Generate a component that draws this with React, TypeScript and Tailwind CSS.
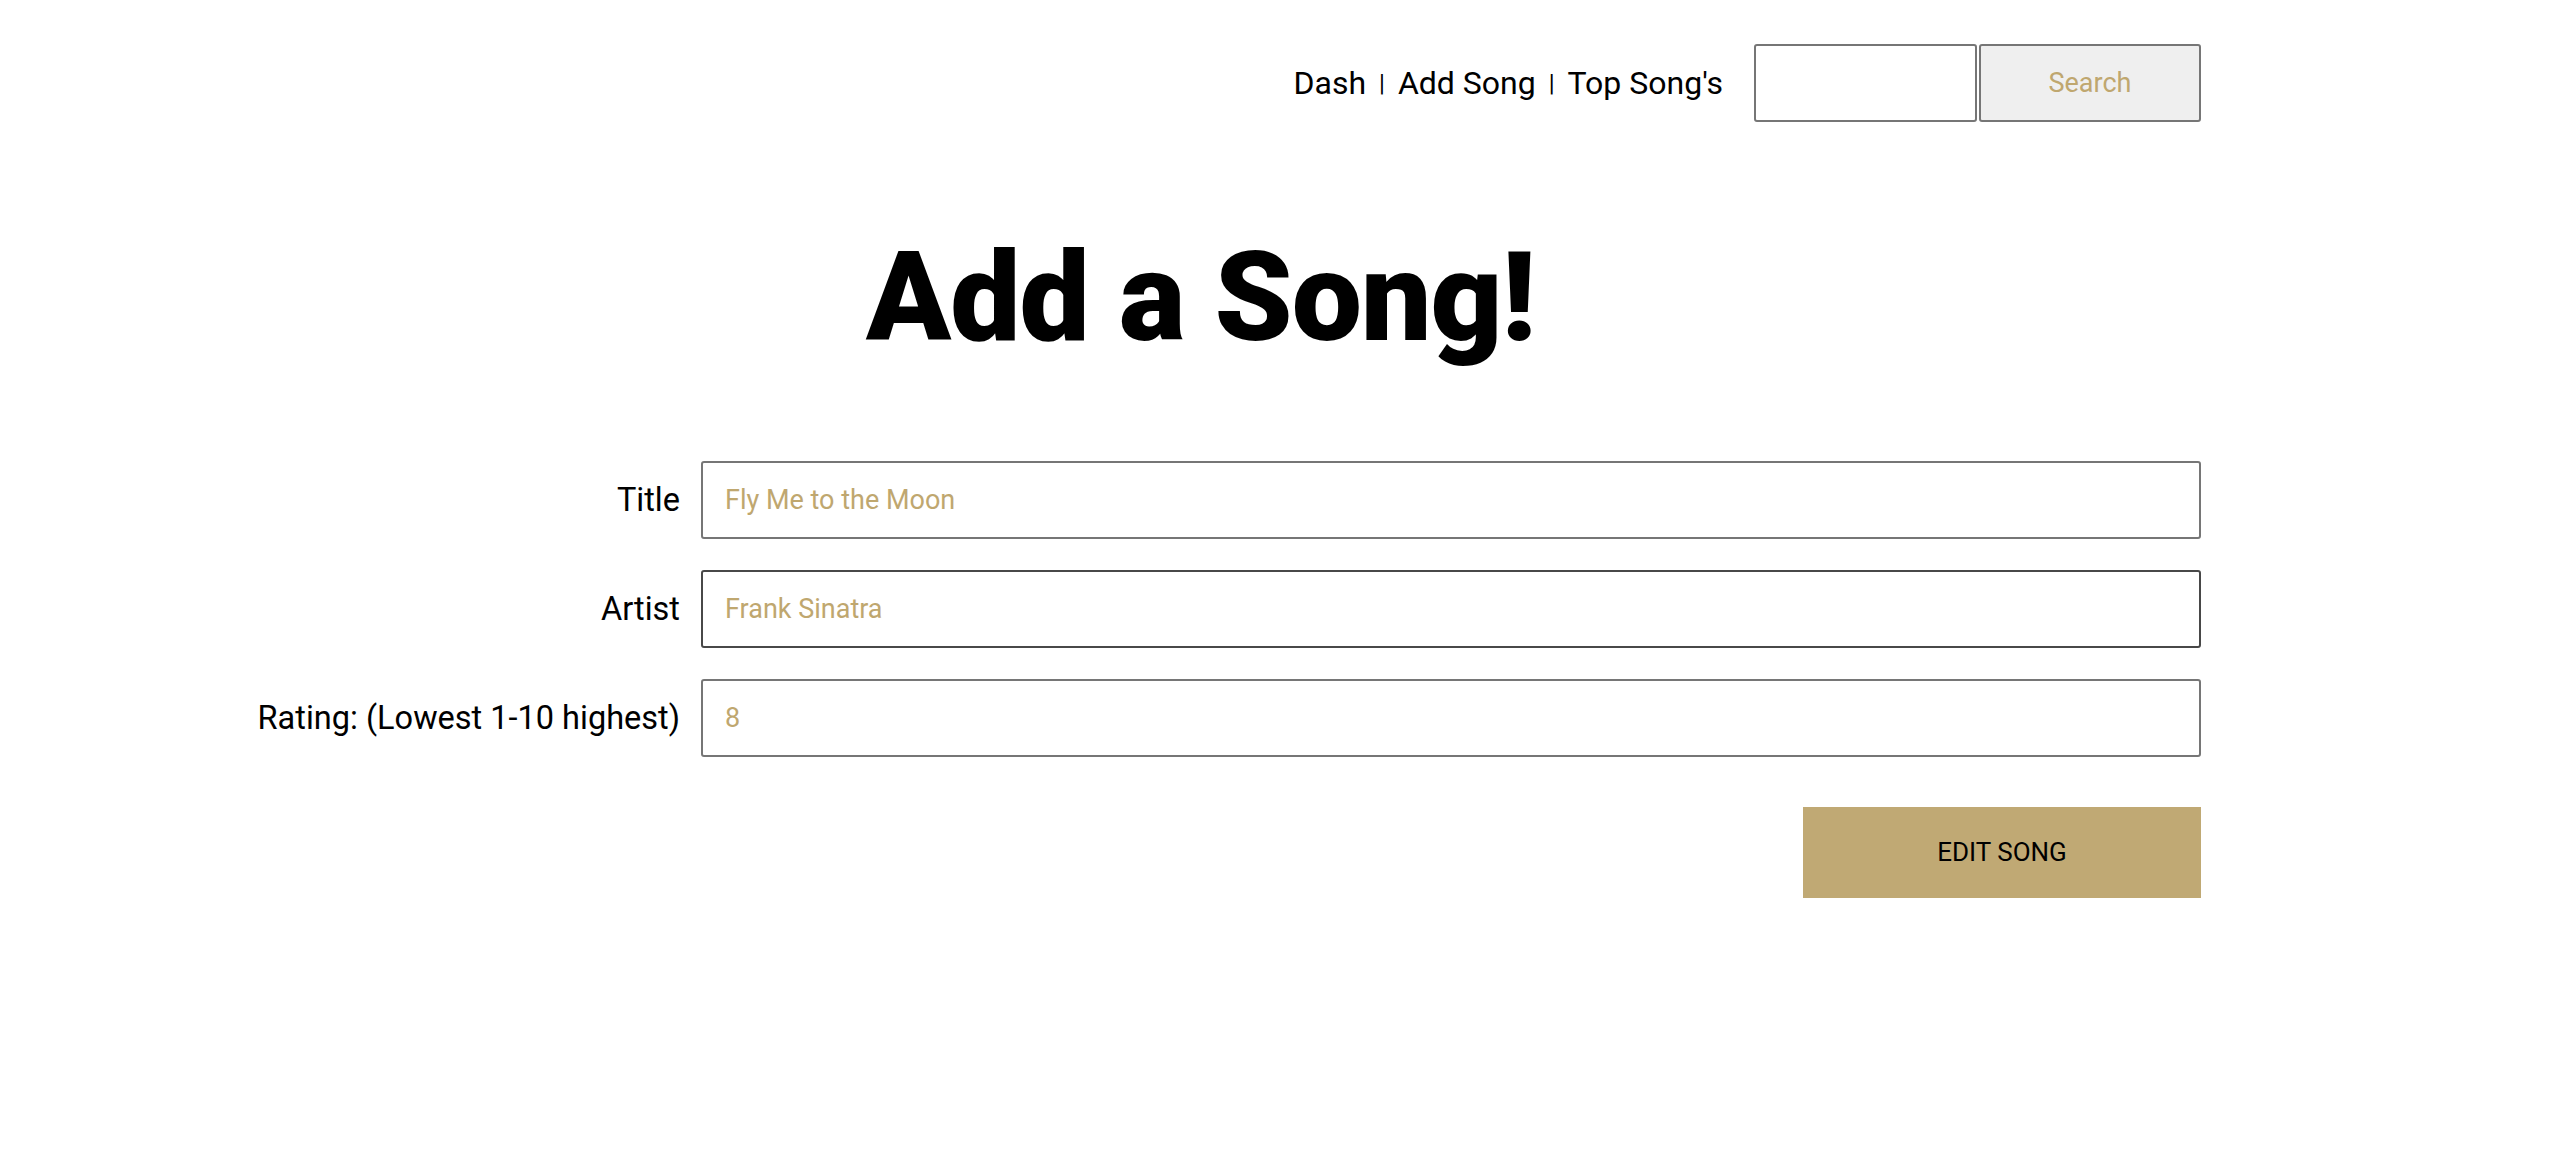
import { useState } from 'react';

interface Field {
  label: string;
  value: string;
  active?: boolean;
}

const fields: Field[] = [
  { label: 'Title', value: 'Fly Me to the Moon' },
  { label: 'Artist', value: 'Frank Sinatra', active: true },
  { label: 'Rating: (Lowest 1-10 highest)', value: '8' },
];

export default function App() {
  const [query, setQuery] = useState('');

  return (
    <div className="min-h-screen bg-white text-black font-['Roboto',sans-serif]">
      <div className="ml-[200px] w-[2001px]">
        {/* Nav */}
        <header className="flex items-center justify-end pt-[44px]">
          <nav className="flex items-center text-[32px] leading-none">
            <a href="#" className="text-black">Dash</a>
            <span className="mx-[13px] text-[24px]">|</span>
            <a href="#" className="text-black">Add Song</a>
            <span className="mx-[13px] text-[24px]">|</span>
            <a href="#" className="text-black">Top Song's</a>
          </nav>
          <input
            value={query}
            onChange={(e) => setQuery(e.target.value)}
            className="ml-[31px] w-[223px] h-[78px] border-2 border-[#767676] rounded-[3px] px-3 text-[26px] outline-none"
          />
          <button className="ml-[2px] w-[222px] h-[78px] border-2 border-[#767676] rounded-[3px] bg-[#efefef] text-[#bfa76f] text-[27px]">
            Search
          </button>
        </header>

        <h1 className="mt-[113px] text-center text-[125px] leading-none font-black tracking-[-1px]">
          Add a Song!
        </h1>

        {/* Form */}
        <form className="mt-[101px] flex flex-col gap-[31px]" onSubmit={(e) => e.preventDefault()}>
          {fields.map((f) => (
            <div key={f.label} className="flex items-center gap-[21px]">
              <label className="w-[480px] text-right text-[32.5px] leading-none">{f.label}</label>
              <input
                defaultValue={f.value}
                className={`flex-1 h-[78px] rounded-[3px] px-[22px] text-[27px] text-[#bfa76f] outline-none border-2 ${
                  f.active ? 'border-[#484848]' : 'border-[#767676]'
                }`}
              />
            </div>
          ))}
          <div className="flex justify-end mt-[19px]">
            <button type="submit" className="w-[398px] h-[91px] bg-[#c0a974] text-black text-[26px]">
              EDIT SONG
            </button>
          </div>
        </form>
      </div>
    </div>
  );
}
